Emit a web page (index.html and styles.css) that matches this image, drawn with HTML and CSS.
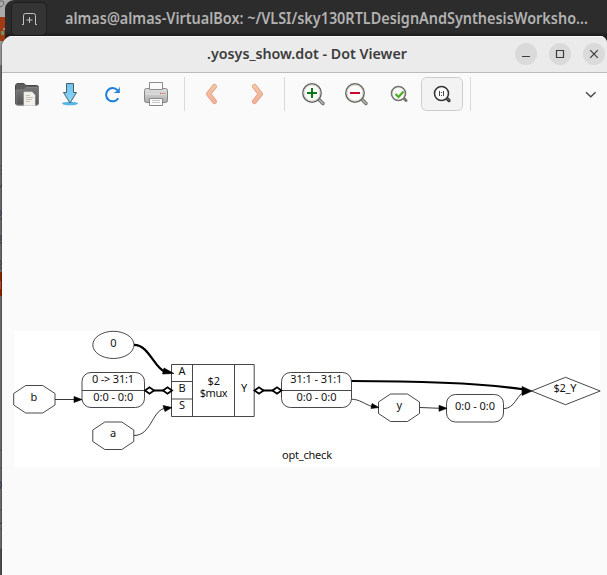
FILE: index.html
```html
<!DOCTYPE html>
<html lang="en">
<head>
<meta charset="utf-8">
<title>.yosys_show.dot - Dot Viewer</title>
<link rel="stylesheet" href="styles.css">
</head>
<body>
<div class="desktop">
  <svg class="backdrop" width="16" height="575" viewBox="0 0 16 575">
    <rect width="16" height="575" fill="#6f6f6f"/>
    <rect width="16" height="17" fill="#aaa"/>
    <path d="M0 1h3q3 4-3 6" stroke="#666" fill="none"/>
    <rect y="17" width="16" height="24" fill="#a13b13"/>
    <path d="M1 31h3v4H1z" fill="#709068"/><path d="M3 28h2v2H3z" fill="#a98c74"/>
    <rect y="41" width="16" height="24" fill="#999"/>
    <rect y="272" width="16" height="24" fill="#8d2500"/>
    <path d="M0 281h1v8H0z" fill="#b05040"/>
    <path d="M0 166h2M0 170h2M0 174h2M0 450h2M0 468h2M0 510h2M0 529h2M0 549h2" stroke="#555"/>
    <path d="M0 188l2-4M0 210q3 3 0 6M0 219h2M0 235q3 3 0 6M0 243h2M0 260q3 3 0 6M0 268h2M0 481q3 4 0 8M0 524l2-2" stroke="#34435a" fill="none"/>
    <rect y="549" width="2" height="26" fill="#505050"/>
  </svg>
  <section class="terminal">
    <button class="new-tab" aria-label="New tab">
      <svg width="15" height="12" viewBox="0 0 15 12" fill="none" stroke="#c4c4c4"><path d="M0 11.5h1.5V2.5q0-2 2-2h8q2 0 2 2v9H15M7.5 4v6M4.500 7h6"/></svg>
    </button>
    <svg class="terminal-title" width="530" height="30"><text x="0" y="20" textLength="523" lengthAdjust="spacingAndGlyphs">almas@almas-VirtualBox: ~/VLSI/sky130RTLDesignAndSynthesisWorksho…</text></svg>
  </section>
  <main class="viewer">
    <header class="titlebar">
      <svg class="viewer-title" width="202" height="28"><text x="0" y="19" textLength="200" lengthAdjust="spacingAndGlyphs">.yosys_show.dot - Dot Viewer</text></svg>
      <div class="controls">
        <button aria-label="Minimize"><svg width="22" height="22"><path d="M7 13.500h8"/></svg></button>
        <button aria-label="Maximize"><svg width="22" height="22"><path d="M7.500 7.500h7v7h-7z"/></svg></button>
        <button aria-label="Close"><svg width="22" height="22"><path d="M7.200 7.200l7.600 7.600M14.800 7.200l-7.600 7.600"/></svg></button>
      </div>
    </header>
    <nav class="toolbar">
      <svg width="605" height="49" viewBox="2 73 605 49" fill="none">
        <defs>
          <linearGradient id="folder" x2="0" y2="1"><stop stop-color="#777"/><stop offset="1" stop-color="#555"/></linearGradient>
          <linearGradient id="arrow" x2="0" y2="1"><stop stop-color="#6fc3ea"/><stop offset="1" stop-color="#8fd8fa"/></linearGradient>
          <linearGradient id="peach" x1="0" y1="84" x2="0" y2="104" gradientUnits="userSpaceOnUse"><stop stop-color="#f5c9a5"/><stop offset="1" stop-color="#f3ac98"/></linearGradient>
          <linearGradient id="metal" x2="0" y2="1"><stop stop-color="#e2e2e2"/><stop offset="1" stop-color="#aaa"/></linearGradient>
        </defs>
        <path d="M15.500 86q0-2.500 2.500-2.500h6l2 2h10.500q2 0 2 2V103q0 2-2 2H17.500q-2 0-2-2z" fill="#5d5d5d" stroke="#484848"/>
        <path d="M16 90h8l2-2.500h12.500V103q0 2-2 2H18q-2 0-2-2z" fill="url(#folder)" stroke="#898989" stroke-width=".7"/>
        <path d="M24 92h8l3 3v10.500H24z" fill="#f2f2ec" stroke="#ddd" stroke-width=".7"/>
        <path d="M26 95.500h4M26 97.500h7M26 99.500h6M26 101.500h4" stroke="#b8b1a4" stroke-width=".8"/>

        <ellipse cx="70" cy="103.500" rx="8" ry="1.700" fill="#58b4e4"/>
        <path d="M66.500 83.500h7v9h3L70 103l-6.500-10.500h3z" fill="url(#arrow)" stroke="#46616e" stroke-linejoin="round"/>

        <path d="M117.600 90.300A6.600 6.600 0 1 0 118.300 98.200" stroke="#1c7fdb" stroke-width="2"/>
        <path d="M119.800 86.500v6.500h-6.500q4.500-1.500 6.500-6.500z" fill="#1c7fdb"/>

        <rect x="144.500" y="88.500" width="23" height="14" rx="2" fill="url(#metal)" stroke="#858585"/>
        <path d="M145 94h22" stroke="#d9d9d9" stroke-width="2"/>
        <path d="M149.500 82.500h13v7h-13z" fill="#fafafa" stroke="#8c8c8c"/>
        <path d="M149.500 98.500h13v7h-13z" fill="#fafafa" stroke="#888"/>
        <path d="M152 100.500h8M152 102.500h8" stroke="#c8c8c8"/>
        <path d="M160 93.500h1.200M162.200 93.500h1.200" stroke="#e44"/><path d="M164.400 93.500h1.200" stroke="#4a4"/>

        <path d="M214.500 86.500l-6 7.500 6 7.500" stroke="#df9e82" stroke-width="5" stroke-linecap="round" stroke-linejoin="round"/>
        <path d="M214.500 86.500l-6 7.500 6 7.500" stroke="url(#peach)" stroke-width="3.600" stroke-linecap="round" stroke-linejoin="round"/>
        <path d="M254.500 86.500l6 7.500-6 7.500" stroke="#df9e82" stroke-width="5" stroke-linecap="round" stroke-linejoin="round"/>
        <path d="M254.500 86.500l6 7.500-6 7.500" stroke="url(#peach)" stroke-width="3.600" stroke-linecap="round" stroke-linejoin="round"/>

        <path d="M184.500 77v34M284.500 77v34M470.500 77v34" stroke="#dadada"/>

        <g><path d="M318 98.500l5 5" stroke="#6b6c68" stroke-width="3.500" stroke-linecap="round"/><path d="M319 99.500l4 4" stroke="#b5b5b0" stroke-width="1.700" stroke-linecap="round"/><circle cx="312" cy="93" r="9.200" fill="#fbfbf8" stroke="#666762" stroke-width="1.500"/><circle cx="312" cy="93" r="7.900" stroke="#d8d8d1"/><path d="M312 88v10M307 93h10" stroke="#087b16" stroke-width="2"/></g>
        <g><path d="M361 98.500l5 5" stroke="#6b6c68" stroke-width="3.500" stroke-linecap="round"/><path d="M362 99.500l4 4" stroke="#b5b5b0" stroke-width="1.700" stroke-linecap="round"/><circle cx="355" cy="93" r="9.200" fill="#fbfbf8" stroke="#666762" stroke-width="1.500"/><circle cx="355" cy="93" r="7.900" stroke="#d8d8d1"/><path d="M350 93h10" stroke="#c9092d" stroke-width="2"/></g>
        <g><path d="M403 97.500l3 3" stroke="#777" stroke-width="3" stroke-linecap="round"/><circle cx="398.500" cy="93.500" r="7" fill="#f7f7f4" stroke="#72736f" stroke-width="1.600"/><path d="M395.500 94l3 3 5-5.500" stroke="#45ad20" stroke-width="2"/></g>
        <rect x="421.500" y="77.500" width="41" height="33" rx="5" fill="#f3f3f3" stroke="#cdcdcd"/>
        <g><path d="M446 97.500l3 3" stroke="#333" stroke-width="3.300" stroke-linecap="round"/><path d="M447 98.500l2 2" stroke="#aaa"/><circle cx="441.500" cy="93.500" r="7" fill="#fafafa" stroke="#333" stroke-width="1.600"/><path d="M439.500 91v5M443.500 91v5M441.500 92v1M441.500 95v1" stroke="#444"/></g>
        <path d="M586 92.300l4.800 4.500 4.800-4.500" stroke="#444" stroke-width="1.300"/>
      </svg>
    </nav>
    <div class="canvas">
      <svg class="graph" width="586" height="136" viewBox="14 331 586 136">
        <g class="node">
          <ellipse cx="113.400" cy="344.900" rx="20.600" ry="13.600"/>
          <path d="M13.700 393.500l12-8h17l12.300 8v11.500l-12.300 8h-17l-12-8z"/>
          <path d="M92.800 430l12-8h17l12 8v11.500l-12 8h-17l-12-8z"/>
          <path d="M378.500 402l12-8h17l12 8v11.500l-12 8h-17l-12-8z"/>
          <rect x="82" y="372.500" width="62.500" height="35" rx="9"/><path d="M82 390.500h62.500"/>
          <path d="M171.500 364.500h82.700v52h-82.700zM192.500 364.500v52M234.500 364.500v52M171.500 381.500h21M171.500 399h21"/>
          <rect x="281.500" y="372.500" width="70" height="35" rx="9"/><path d="M281.500 390.500h70"/>
          <rect x="446.500" y="394.500" width="57" height="27.500" rx="9"/>
          <path d="M531.500 391l34-13.700 34.700 13.700-34.700 13.700z"/>
        </g>
        <g class="edge">
          <path d="M55 399.500h20"/><path d="M134 435.500c17 0 18-24 30-27"/>
          <path d="M351.500 399.200c8 0 13 5 21 7.500M420 407.500l20 .8M504 408.700c11-1 12-12 20-17"/>
          <path class="bus" d="M134 344.900c15 0 20 23 31 27M351.500 381c55 0 131 2 173 8.500M153 390.500h11M263 390.500h11"/>
          <path class="arrow" d="M82 399.500l-8-3v6zM172 407.500l-9-2 2 6zM174 373.500l-10-5.500-1.500 6zM379 407.500l-7-4-1 5zM447 408.300l-8-3v6zM532 391l-10-4.500v9z"/>
          <path class="bus diamond" d="M145 390.500l4.500-3.200 4.500 3.200-4.500 3.200zM163 390.500l4.500-3.200 4.500 3.200-4.500 3.200zM254.500 390.500l4.500-3.200 4.500 3.200-4.500 3.200zM272.500 390.500l4.500-3.200 4.500 3.200-4.500 3.200z"/>
        </g>
        <g class="labels">
          <text x="113.300" y="346.500">0</text><text x="34" y="401">b</text><text x="113" y="437">a</text>
          <text x="113" y="383" textLength="42">0 -&gt; 31:1</text><text x="113.300" y="400.500" textLength="40">0:0 - 0:0</text>
          <text x="182" y="374.500">A</text><text x="182" y="391.800">B</text><text x="182" y="409">S</text>
          <text x="213.700" y="385">$2</text><text x="213.700" y="397" textLength="28">$mux</text><text x="244" y="391.800">Y</text>
          <text x="316.300" y="383" textLength="52">31:1 - 31:1</text><text x="316.500" y="400.500" textLength="40">0:0 - 0:0</text>
          <text x="399.300" y="409">y</text><text x="475" y="410" textLength="40">0:0 - 0:0</text><text x="565" y="392" textLength="23">$2_Y</text>
          <text x="307" y="459" textLength="50">opt_check</text>
        </g>
      </svg>
    </div>
  </main>
</div>
</body>
</html>
```
FILE: styles.css
```css
* { box-sizing: border-box; }
body { margin: 0; overflow: hidden; font-family: "Noto Sans", sans-serif; }
svg { display: block; }
button { padding: 0; border: 0; }
.desktop { position: relative; width: 607px; height: 575px; overflow: hidden; background: #6f6f6f; }
.backdrop { position: absolute; left: 0; top: 0; }
.terminal { position: absolute; left: 5px; top: 0; width: 602px; height: 48px; display: flex; background: linear-gradient(#2c2c2c 31px, #202020 36px); border-radius: 9px 0 0 0; }
.new-tab { display: flex; align-items: center; justify-content: center; width: 36px; height: 34px; margin: 2px 18px 0 6px; border: 1px solid #1e1e1e; border-radius: 5px; background: #343434; }
.terminal-title { margin-top: 4px; overflow: visible; }
.terminal-title text { fill: #b2b2b2; font: 600 15.500px "Noto Sans", sans-serif; }
.viewer { position: absolute; left: 2px; top: 36px; width: 605px; height: 539px; display: flex; flex-direction: column; background: #fafafa; border-radius: 11px 7px 0 0; overflow: hidden; box-shadow: 0 0 2px #111; }
.titlebar { display: flex; align-items: center; height: 37px; padding-bottom: 1px; flex: none; background: #ebebeb; border-top: 1px solid #fafafa; border-bottom: 1px solid #bcbcbc; }
.viewer-title { margin-left: 205px; overflow: visible; }
.viewer-title text { fill: #3d3d3d; font: 600 15px "Noto Sans", sans-serif; }
.controls { display: flex; gap: 12px; margin-left: 106px; }
.controls button { flex: none; width: 22px; height: 22px; border-radius: 50%; background: #dadada; }
.controls path { fill: none; stroke: #3b3b3b; stroke-width: 1.2; }
.toolbar { flex: none; height: 49px; }
.canvas { flex: 1; padding: 209px 0 0 12px; }
.graph { background: #fff; overflow: visible; }
.node { fill: #fff; stroke: #333; stroke-width: .9; }
.edge { fill: none; stroke: #222; stroke-width: .9; }
.edge .bus { stroke: #000; stroke-width: 2.2; }
.edge .arrow { fill: #000; stroke: #000; stroke-width: .6; }
.edge .diamond { fill: #fff; stroke-width: 1.8; }
.labels { font: 11px "Noto Sans", sans-serif; fill: #111; text-anchor: middle; }
```
